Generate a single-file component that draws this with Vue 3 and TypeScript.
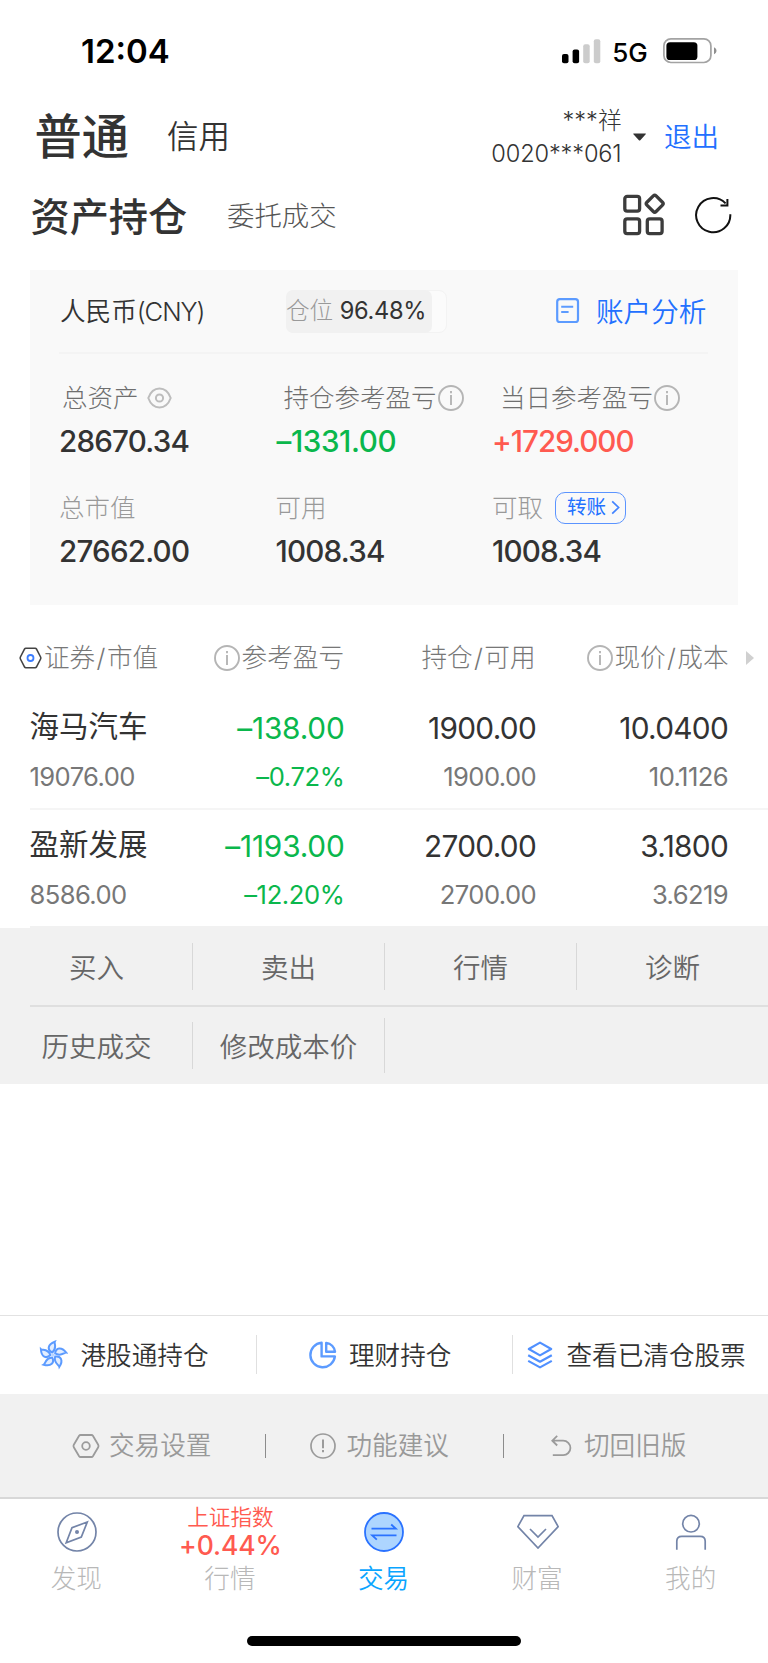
<script setup lang="ts">
interface Holding {
  name: string
  marketValue: string
  profit: string
  profitRate: string
  position: string
  available: string
  price: string
  cost: string
}

const holdings: Holding[] = [
  { name: '海马汽车', marketValue: '19076.00', profit: '–138.00', profitRate: '–0.72%', position: '1900.00', available: '1900.00', price: '10.0400', cost: '10.1126' },
  { name: '盈新发展', marketValue: '8586.00', profit: '–1193.00', profitRate: '–12.20%', position: '2700.00', available: '2700.00', price: '3.1800', cost: '3.6219' },
]

const actionRows: string[][] = [
  ['买入', '卖出', '行情', '诊断'],
  ['历史成交', '修改成本价', '', ''],
]

const petals: number[] = [0, 72, 144, 216, 288]
</script>

<template>
  <main class="screen">
    <div class="status">
      <span class="time">12:04</span>
      <svg class="signal" width="39" height="25" viewBox="0 0 39 25">
        <rect x="0" y="15" width="6.5" height="9.3" rx="2" fill="#000" />
        <rect x="10.6" y="10.5" width="6.5" height="13.8" rx="2" fill="#000" />
        <rect x="21.2" y="5.2" width="6.5" height="19.1" rx="2" fill="#ccc" />
        <rect x="31.8" y="0.3" width="6.5" height="24" rx="2" fill="#ccc" />
      </svg>
      <span class="network">5G</span>
      <svg class="battery" width="54" height="26" viewBox="0 0 54 26">
        <rect x="0.9" y="0.9" width="47" height="23.6" rx="7" fill="none" stroke="#a3a3a3" stroke-width="1.7" />
        <rect x="3.4" y="4.2" width="31" height="17.8" rx="3.6" fill="#000" />
        <path d="M51 9.3c3.3 1.4 3.3 5.5 0 6.9z" fill="#8f8f8f" />
      </svg>
    </div>

    <header class="header">
      <span class="mode-active">普通</span>
      <span class="mode">信用</span>
      <div class="account">
        <span>***祥</span>
        <span class="account-no">0020***061</span>
      </div>
      <svg class="caret" width="13" height="8" viewBox="0 0 13 8"><path d="M.8.4h11.6c.5 0 .6.5.3.8L7.3 7.2q-.7.7-1.4 0L.4 1.2C.1.9.3.4.8.4z" fill="#333" /></svg>
      <span class="logout">退出</span>
    </header>

    <nav class="subnav">
      <span class="sub-active">资产持仓</span>
      <span class="sub">委托成交</span>
      <svg class="grid-icon" width="42" height="44" viewBox="0 0 42 44" fill="none" stroke="#3c3c3c" stroke-width="3.300">
        <rect x="1.8" y="3.4" width="14.8" height="14.8" rx="2.4" />
        <rect x="1.8" y="25.9" width="14.8" height="14.8" rx="2.4" />
        <rect x="24.3" y="25.9" width="14.8" height="14.8" rx="2.4" />
        <rect x="25.2" y="4.2" width="13" height="13" rx="2" transform="rotate(45 31.7 10.7)" />
      </svg>
      <svg class="refresh" width="38" height="38" viewBox="0 0 38 38" fill="none" stroke="#111" stroke-width="2">
        <path d="M36.3 18.3A17.1 17.1 0 1 1 31.6 7.4" />
        <path d="M33.4 3v6.4h-6.9" />
      </svg>
    </nav>

    <section class="card">
      <div class="card-head">
        <span class="currency">人民币<span class="code">(CNY)</span></span>
        <div class="ratio"><div class="ratio-fill"><span class="ratio-label">仓位</span><span class="ratio-value">96.48%</span></div></div>
        <svg class="doc" width="24" height="26" viewBox="0 0 24 26" fill="none" stroke="#5c9bff" stroke-width="2.200">
          <rect x="1.2" y="1.2" width="20.8" height="22.8" rx="2.6" />
          <path d="M5.2 8.7h12M5.2 13.9h7.4" stroke-width="2" />
        </svg>
        <span class="analysis">账户分析</span>
      </div>
      <div class="metrics">
        <div class="metric">
          <div class="label dark"><span>总资产</span>
            <svg class="eye" width="25" height="22" viewBox="0 0 25 22" fill="none" stroke="#bdbdbd" stroke-width="2">
              <path d="M1.3 11C3.4 5.200 7.400 1.600 12.500 1.600S21.600 5.200 23.700 11C21.600 16.800 17.600 20.400 12.500 20.400S3.400 16.800 1.300 11z" />
              <circle cx="12.500" cy="11" r="3.600" />
            </svg>
          </div>
          <div class="value">28670.34</div>
        </div>
        <div class="metric">
          <div class="label dark shifted"><span>持仓参考盈亏</span><svg class="info" viewBox="0 0 26 26"><circle cx="13" cy="13" r="12" /><path d="M13 10v10M13 6v2.200" /></svg></div>
          <div class="value green">–1331.00</div>
        </div>
        <div class="metric">
          <div class="label dark shifted"><span>当日参考盈亏</span><svg class="info" viewBox="0 0 26 26"><circle cx="13" cy="13" r="12" /><path d="M13 10v10M13 6v2.200" /></svg></div>
          <div class="value red">+1729.000</div>
        </div>
        <div class="metric">
          <div class="label"><span>总市值</span></div>
          <div class="value">27662.00</div>
        </div>
        <div class="metric">
          <div class="label"><span>可用</span></div>
          <div class="value">1008.34</div>
        </div>
        <div class="metric">
          <div class="label"><span>可取</span>
            <div class="transfer">转账<svg width="9" height="15" viewBox="0 0 9 15" fill="none" stroke="#4384ff" stroke-width="1.700"><path d="M1.200 1.300L7.600 7.500L1.200 13.700" /></svg></div>
          </div>
          <div class="value">1008.34</div>
        </div>
      </div>
    </section>

    <section class="table">
      <div class="thead">
        <div class="th first">
          <svg class="hex" width="23" height="22" viewBox="0 0 23 22" fill="none">
            <path d="M6.800 1.300h9.400q.8 0 1.200.7l4.200 8q.5 1 0 2l-4.200 8q-.4.700-1.200.700H6.800q-.8 0-1.200-.700l-4.200-8q-.5-1 0-2l4.200-8q.4-.700 1.200-.700z" stroke="#444" stroke-width="1.600" />
            <circle cx="11.500" cy="11" r="3" stroke="#3b7dff" stroke-width="1.800" />
          </svg>证券<span class="slash">/</span>市值
        </div>
        <div class="th"><svg class="info" viewBox="0 0 26 26"><circle cx="13" cy="13" r="12" /><path d="M13 10v10M13 6v2.200" /></svg><span class="gap">参考盈亏</span></div>
        <div class="th">持仓<span class="slash">/</span>可用</div>
        <div class="th"><svg class="info" viewBox="0 0 26 26"><circle cx="13" cy="13" r="12" /><path d="M13 10v10M13 6v2.200" /></svg><span class="gap">现价</span><span class="slash">/</span>成本</div>
        <svg class="more" width="8" height="14" viewBox="0 0 8 14"><path d="M0 0l8 7l-8 7z" fill="#d0d0d0" /></svg>
      </div>
      <div v-for="h in holdings" :key="h.name" class="row">
        <div class="cell name-cell"><span class="name">{{ h.name }}</span><span class="minor">{{ h.marketValue }}</span></div>
        <div class="cell gain"><span class="major">{{ h.profit }}</span><span class="minor">{{ h.profitRate }}</span></div>
        <div class="cell hold"><span class="major">{{ h.position }}</span><span class="minor">{{ h.available }}</span></div>
        <div class="cell"><span class="major">{{ h.price }}</span><span class="minor">{{ h.cost }}</span></div>
      </div>
    </section>

    <section class="actions">
      <div v-for="(row, r) in actionRows" :key="r" class="action-row">
        <div v-for="(a, i) in row" :key="i" class="action" :class="{ blank: !a, tall: r === 1 && i === 1 }">{{ a }}</div>
      </div>
    </section>

    <div class="spacer"></div>

    <section class="links">
      <div class="link l1">
        <svg width="30" height="30" viewBox="-15 -15 30 30" fill="none" stroke="#5c9bff" stroke-width="2">
          <g v-for="p in petals" :key="p" :transform="`rotate(${p})`">
            <path d="M-.8 -2.500C-6 -5 -5.500 -10.500 1.800 -13.300C.9 -11.300 4.600 -7 -.8 -2.500z" fill="#e3eeff" />
          </g>
          <circle r="1.800" fill="#b9d5ff" stroke="none" />
        </svg>
        <span>港股通持仓</span>
      </div>
      <div class="link l2">
        <svg width="28" height="28" viewBox="0 0 28 28" fill="none" stroke="#5c9bff" stroke-width="2.400">
          <path d="M12.600 1.700A12.300 12.300 0 1 0 25.900 15.400H12.600z" stroke-linejoin="round" />
          <path d="M17.200 1.900V10.700H26A9.800 9.800 0 0 0 17.200 1.900z" stroke-linejoin="round" />
        </svg>
        <span>理财持仓</span>
      </div>
      <div class="link l3">
        <svg width="26" height="28" viewBox="0 0 26 28" fill="none" stroke="#5090ff" stroke-width="2.200" stroke-linejoin="round">
          <path d="M13 1.600L24.200 8L13 14.400L1.800 8z" />
          <path d="M1.200 14.200L13 20.700L24.800 14.200M1.200 19.900L13 26.400L24.800 19.900" />
        </svg>
        <span>查看已清仓股票</span>
      </div>
    </section>

    <section class="settings">
      <svg class="s-hex" width="28" height="24" viewBox="0 0 28 24" fill="none" stroke="#9b9b9b" stroke-width="1.800">
        <path d="M8.600 1h10.800q1 0 1.500.800l5.300 9q.700 1.200 0 2.400l-5.300 9q-.5.800-1.500.800H8.600q-1 0-1.500-.800l-5.300-9q-.700-1.200 0-2.400l5.300-9q.5-.800 1.500-.800z" />
        <circle cx="14" cy="12" r="3.800" />
      </svg>
      <span class="s1">交易设置</span>
      <i class="bar b1"></i>
      <svg class="s-warn" width="26" height="26" viewBox="0 0 26 26" fill="none" stroke="#9b9b9b" stroke-width="1.700">
        <circle cx="13" cy="13" r="12" /><path d="M13 6.500v8.700M13 17v2.200" stroke-width="2" />
      </svg>
      <span class="s2">功能建议</span>
      <i class="bar b2"></i>
      <svg class="s-undo" width="21" height="22" viewBox="0 0 21 22" fill="none" stroke="#9b9b9b" stroke-width="1.800">
        <path d="M6.200 .900L1.300 5.700L6.200 10.500M1.300 5.700H12.200A7.200 7.200 0 0 1 12.200 20.100H1.800" />
      </svg>
      <span class="s3">切回旧版</span>
    </section>

    <nav class="tabs">
      <div class="tab">
        <svg width="42" height="42" viewBox="-21 -21 42 42" fill="none" stroke="#7384a8" stroke-width="1.700">
          <circle r="19" />
          <path d="M10.300 -10L-5 -4.300L-10.800 10.700L4.300 5z" />
          <circle r="2" fill="#7384a8" stroke="none" />
        </svg>
        <span>发现</span>
      </div>
      <div class="tab">
        <div class="index"><span class="index-name">上证指数</span><span class="index-rate">+0.44%</span></div>
        <span>行情</span>
      </div>
      <div class="tab current">
        <svg width="42" height="42" viewBox="-21 -21 42 42" fill="none" stroke="#2a72ff" stroke-width="1.800">
          <circle r="19" fill="#add5ff" />
          <path d="M-12.500 -3.300H11.800L7.200 -7.500M12.500 3.400H-11.800L-7.200 7.600" />
        </svg>
        <span>交易</span>
      </div>
      <div class="tab">
        <svg width="42" height="42" viewBox="-21 -21 42 42" fill="none" stroke="#7384a8" stroke-width="1.700">
          <path d="M-14 -16.300H14L20.200 -5.300L0 16L-20.200 -5.300z" />
          <path d="M-8 -3L0 5L8 -3" />
        </svg>
        <span>财富</span>
      </div>
      <div class="tab">
        <svg width="42" height="42" viewBox="-21 -21 42 42" fill="none" stroke="#7384a8" stroke-width="1.700">
          <circle cy="-8.300" r="8.300" />
          <path d="M-14.200 17.700V9.300Q-14.200 4.400 -9.200 4.400H9.200Q14.200 4.400 14.200 9.300V17.700" />
        </svg>
        <span>我的</span>
      </div>
    </nav>
    <div class="home"></div>
  </main>
</template>

<style>
html, body { margin: 0; background: #fff; }
</style>

<style scoped>
.screen {
  width: 768px;
  height: 1663px;
  display: flex;
  flex-direction: column;
  background: #fff;
  color: #333;
  font-family: Inter, "Noto Sans CJK SC", sans-serif;
  font-size: 25.6px;
  line-height: 1.2;
  white-space: nowrap;
  overflow: hidden;
}
.screen * { box-sizing: border-box; }
svg { display: block; flex: none; }
.status { height: 92px; display: flex; align-items: flex-start; color: #000; }
.time { width: 480px; padding-left: 81px; margin-top: 31px; line-height: 40px; font-size: 33px; font-weight: 600; }
.signal { margin: 39px 0 0 81.700px; }
.network { width: 50px; margin: 32px 0 0 11.500px; line-height: 41px; font-size: 26px; font-weight: 500; }
.battery { margin: 38px 0 0 0.500px; }
.header { height: 90px; display: flex; align-items: center; }
.mode-active { width: 133px; padding-left: 34.500px; font-size: 47.200px; font-weight: 500; line-height: 60px; }
.mode { margin-left: 34px; padding-top: 2px; font-size: 31.400px; font-weight: 350; }
.account { margin-left: auto; display: flex; flex-direction: column; align-items: flex-end; font-size: 23.600px; line-height: 33px; font-weight: 300; }
.account-no { letter-spacing: -0.15px; }
.caret { margin: 0 18.500px 0 11px; }
.logout { width: 104px; padding-top: 2px; font-size: 27.600px; color: #2270ff; font-weight: 350; }
.subnav { height: 66px; display: flex; align-items: center; }
.sub-active { width: 196px; padding-left: 30.500px; padding-top: 3px; font-size: 39.200px; font-weight: 500; }
.sub { margin-left: 31px; padding-top: 2px; font-size: 27.400px; font-weight: 300; color: #555; }
.grid-icon { margin-left: auto; }
.refresh { margin: 0 36px 0 29.500px; }
.card { margin: 22px 30px 0; height: 335px; padding: 0 30px 0 29px; background: #f9f9f9; flex: none; }
.card-head { height: 84px; border-bottom: 2px solid #f4f4f4; display: flex; align-items: center; }
.currency { width: 227px; padding-left: 1px; padding-top: 2px; font-weight: 350; }
.code { letter-spacing: -1.1px; }
.ratio { width: 161px; height: 43px; border: 1px solid #f3f3f3; border-radius: 8px; background: #fbfbfb; font-size: 23.600px; }
.ratio-fill { width: 146px; height: 43px; margin: -1px; border-radius: 7px; background: #f1f1f1; display: flex; align-items: center; }
.ratio-label { color: #999; font-weight: 300; padding-top: 1px; }
.ratio-value { margin-left: 6.500px; padding-top: 1px; letter-spacing: -0.3px; }
.doc { margin-left: auto; }
.analysis { width: 129px; padding-left: 16.500px; padding-top: 3px; margin-right: -0.500px; font-size: 27.600px; color: #2270ff; font-weight: 350; }
.metrics { display: grid; grid-template-columns: 216.500px 216.500px 1fr; row-gap: 23px; padding-top: 22px; margin-right: -20px; }
.label { height: 43px; display: flex; align-items: center; font-size: 25.500px; font-weight: 300; color: #999; }
.label > span { padding-top: 2px; }
.label.dark { color: #6f6f6f; }
.metric:first-child .label { padding-left: 3px; }
.label.shifted { padding-left: 8px; }
.label.shifted .info { margin-left: 1px; }
.eye { margin-left: 8px; }
.value { height: 44px; line-height: 44px; font-size: 29.600px; font-weight: 500; letter-spacing: -0.8px; }
.value.green { letter-spacing: -0.4px; padding-left: 1px; }
.value.red { letter-spacing: -1px; }
.green, .gain { color: #0ab74c; }
.red { color: #ff5a50; }
.info { width: 26px; height: 26px; fill: none; stroke: #b5b5b5; stroke-width: 1.900; }
.transfer { margin-left: 12px; width: 71px; height: 32px; border: 1.500px solid #5b94ff; border-radius: 10px; font-size: 19.600px; line-height: 31px; font-weight: 400; color: #2270ff; display: flex; align-items: center; padding-left: 11px; gap: 5px; }
.table { padding-top: 27px; flex: none; }
.thead, .row { display: grid; grid-template-columns: 160px 153.500px 191.500px 193px 1fr; padding-left: 30px; }
.thead { height: 52px; align-items: center; margin-bottom: 8px; color: #777; font-weight: 300; }
.th { display: flex; justify-content: flex-end; align-items: center; margin-right: -0.500px; }
.th.first { justify-content: flex-start; margin-left: -11px; }
.slash { margin: 0 1.400px; }
.hex { margin-right: 2px; }
.gap { margin-left: 1.500px; }
.more { margin-left: 18px; }
.row { height: 118px; margin-left: 30px; padding: 13px 0 0; border-bottom: 2px solid #f5f5f5; }
.row:last-child { border-color: #f1f1f1; }
.cell { display: flex; flex-direction: column; align-items: flex-end; }
.name-cell { align-items: flex-start; margin-left: -0.500px; }
.gain, .hold { margin-right: -1px; }
.name { height: 46px; line-height: 42px; font-size: 29.500px; }
.major { height: 46px; line-height: 46px; font-size: 29.800px; letter-spacing: -0.7px; }
.minor { line-height: 51px; font-size: 25.600px; letter-spacing: -0.6px; }
.gain .major { letter-spacing: -0.2px; }
.gain .minor { letter-spacing: -0.4px; }
.cell:not(.gain) .minor { color: #777; }
.actions { flex: none; height: 156px; background: #f1f1f1; }
.action-row { height: 79px; display: grid; grid-template-columns: repeat(4, 192px); position: relative; }
.action-row:first-child::after { content: ""; position: absolute; left: 30px; right: 0; bottom: 0; height: 2px; background: #dfdfdf; }
.action { height: 77px; padding: 3px 0 0 1px; display: flex; align-items: center; justify-content: center; font-size: 27.500px; font-weight: 350; color: #666; position: relative; }
.action::after { content: ""; position: absolute; right: -1px; top: 15px; height: 47px; width: 1px; background: #d8d8d8; }
.action.tall::after { top: 11px; height: 55px; }
.action.blank::after, .action:last-child::after { display: none; }
.spacer { flex: 1; }
.links { flex: none; height: 79px; display: grid; grid-template-columns: repeat(3, 256px); border-top: 1px solid #e2e2e2; font-weight: 350; }
.link { display: flex; align-items: center; position: relative; }
.link span { padding-top: 2px; }
.link + .link::before { content: ""; position: absolute; left: 0; top: 19px; height: 39px; width: 1px; background: #e0e0e0; }
.l1 { padding-left: 38px; gap: 12.500px; }
.l2 { padding-left: 53px; gap: 12px; }
.l3 { padding-left: 15px; gap: 13.500px; }
.settings { flex: none; height: 103px; background: #f1f1f1; display: flex; align-items: center; color: #999; font-weight: 350; }
.settings span { padding-top: 2px; }
.s-hex { margin-left: 71.500px; }
.s1 { width: 156px; margin-left: 9.500px; }
.bar { width: 1px; height: 24px; background: #8c8c8c; }
.s-warn { margin-left: 44px; }
.s2 { width: 156px; margin-left: 10.500px; }
.s-undo { margin-left: 47.500px; }
.s3 { margin-left: 12px; }
.tabs { flex: none; height: 139px; border-top: 2px solid #d8d8d8; display: grid; grid-template-columns: repeat(5, 1fr); color: #b8b8b8; font-weight: 300; }
.tab { display: flex; flex-direction: column; align-items: center; padding-top: 12px; }
.tab > span { line-height: 52px; margin-right: 1px; }
.current { color: #0aa5ff; font-weight: 350; }
.index { height: 42px; margin-top: -11px; margin-bottom: 11px; display: flex; flex-direction: column; align-items: center; color: #ff5a50; }
.index-name { height: 31px; line-height: 34px; font-size: 21.600px; font-weight: 350; }
.index-rate { line-height: 29px; font-size: 26.500px; font-weight: 500; letter-spacing: -0.1px; }
.home { flex: none; width: 274px; height: 10px; margin: 0 auto 17px; border-radius: 5px; background: #000; }
</style>
